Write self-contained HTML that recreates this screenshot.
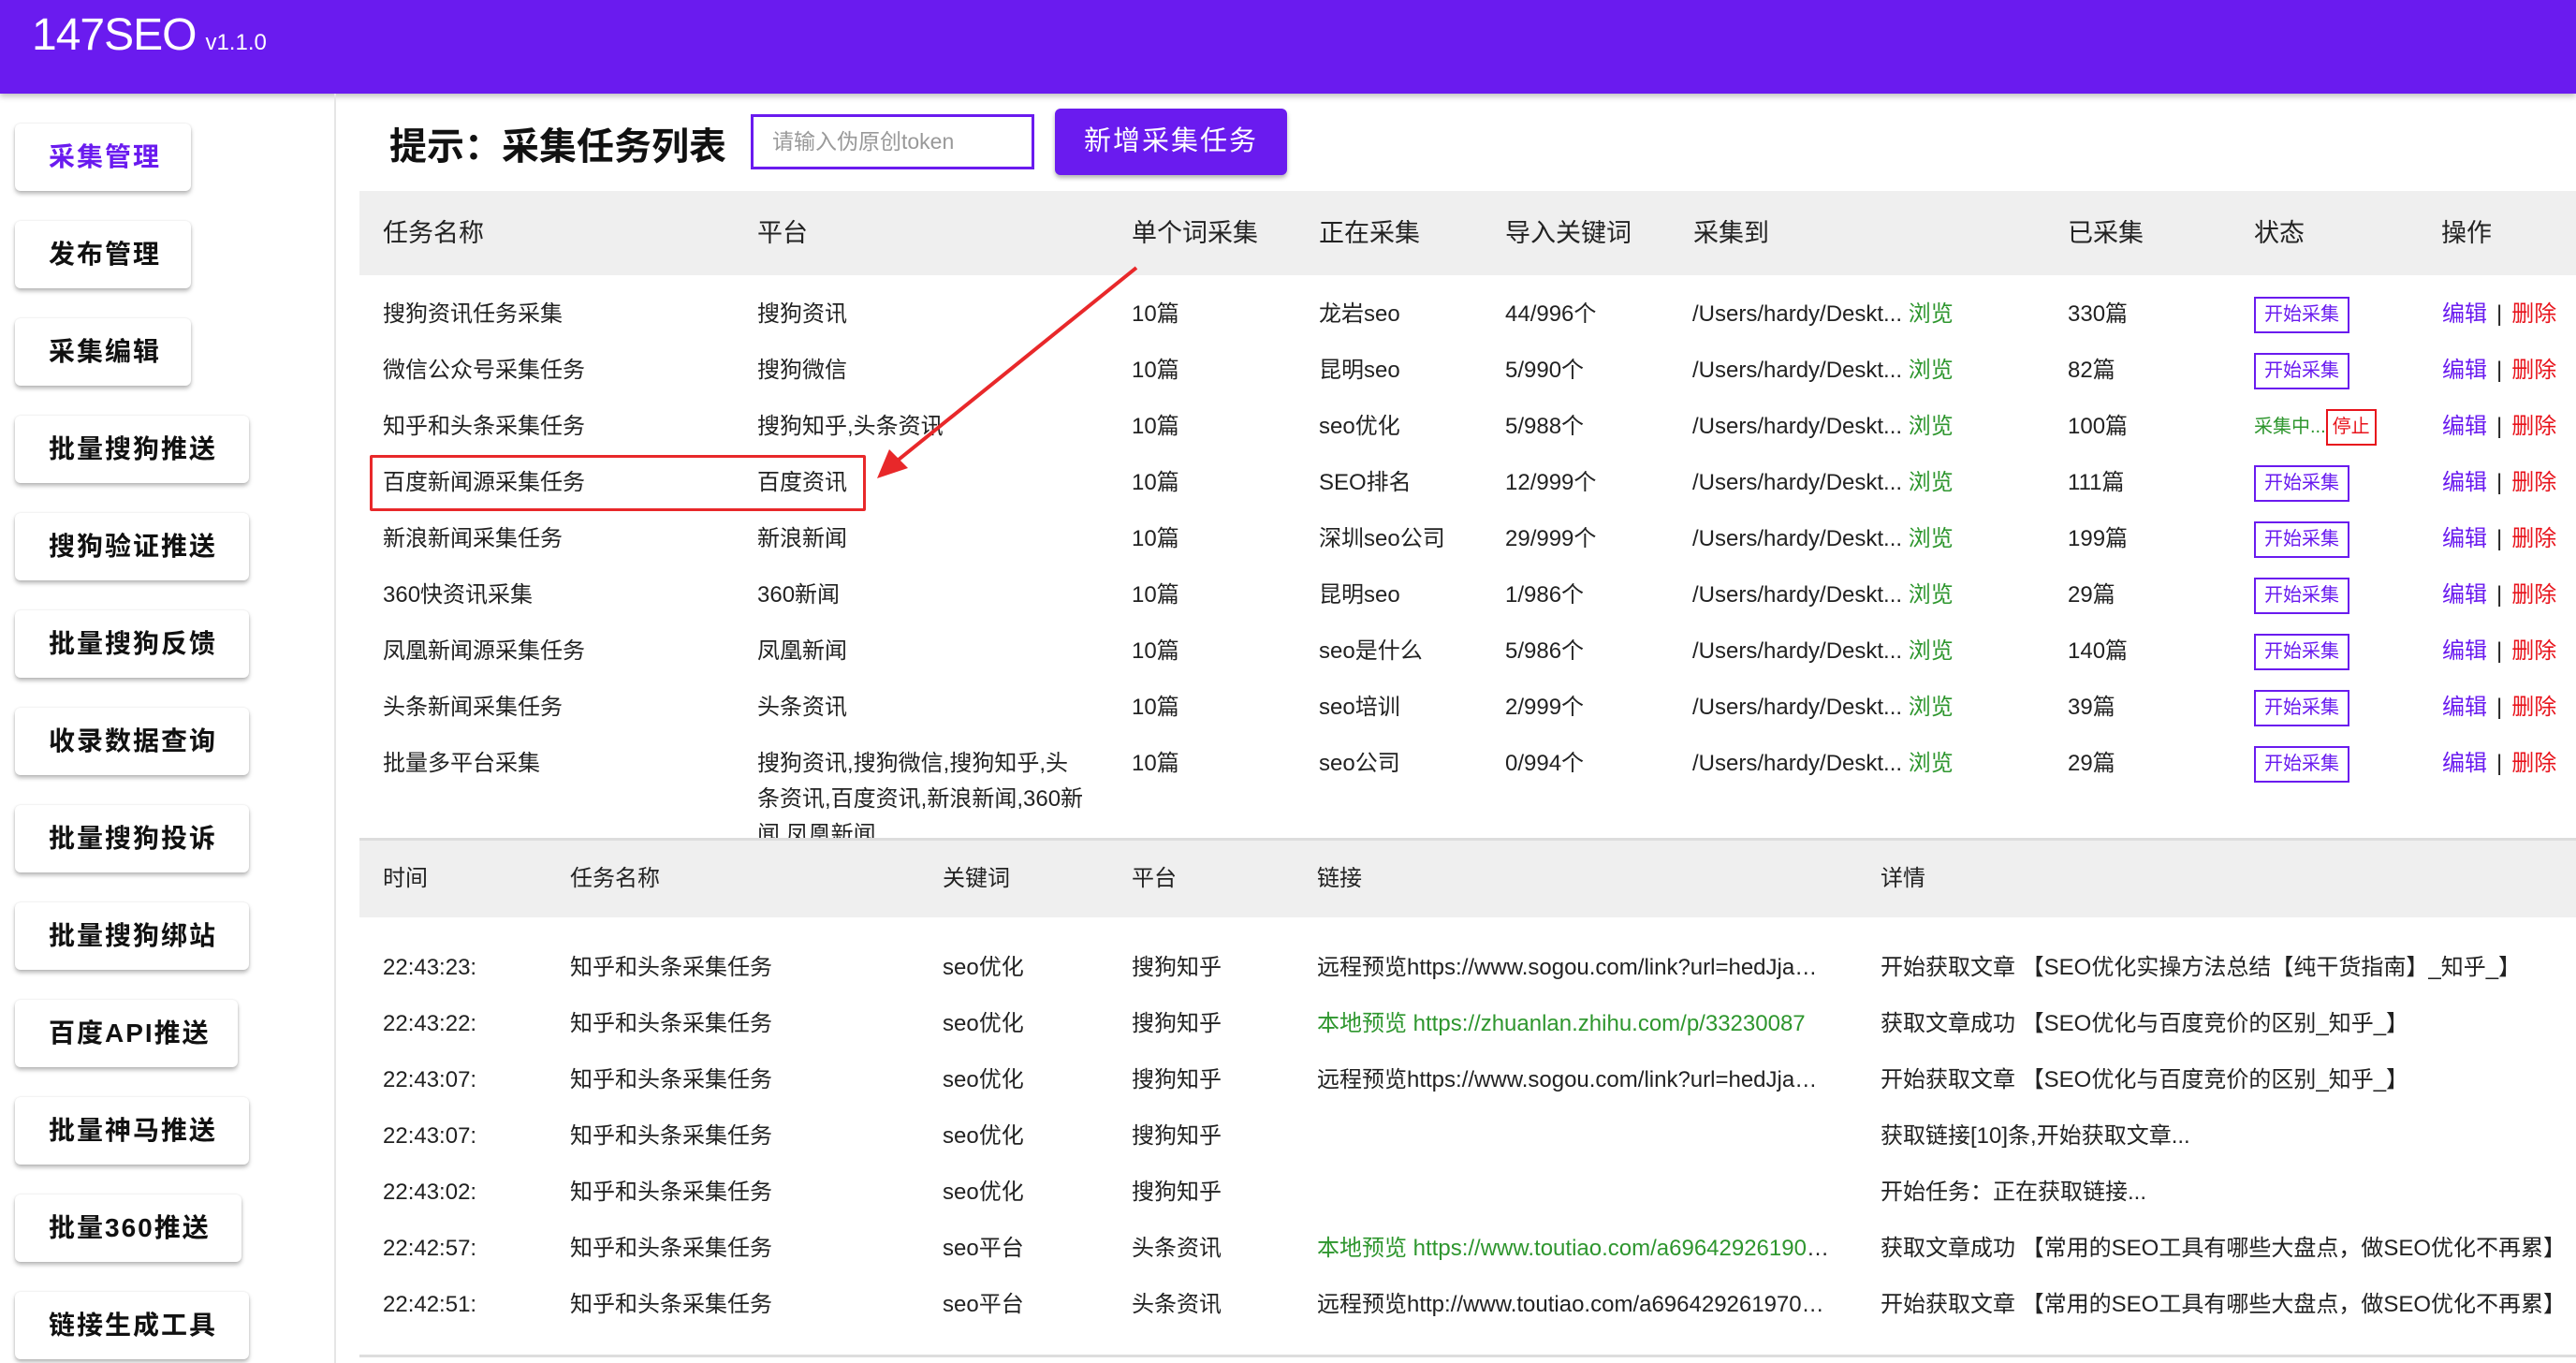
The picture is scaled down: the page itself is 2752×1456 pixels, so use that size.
<!DOCTYPE html>
<html><head><meta charset="utf-8"><style>
*{margin:0;padding:0;box-sizing:border-box}
body{width:2752px;height:1456px;overflow:hidden;background:#fff;font-family:"Liberation Sans","Noto Sans CJK SC",sans-serif;color:#222;position:relative}
.hdr{position:absolute;left:0;top:0;width:2752px;height:100px;background:#6a1bef;box-shadow:0 3px 6px rgba(0,0,0,.25)}
.logo{position:absolute;left:34px;top:10px;color:#fff;font-size:48px;letter-spacing:-1px}
.logo small{font-size:24px;margin-left:10px;letter-spacing:0}
.side{position:absolute;left:0;top:100px;width:359px;height:1356px;border-right:2px solid #e6e6e6}
.btn{position:absolute;left:16px;height:72px;width:188px;background:#fff;border-radius:6px;box-shadow:0 3px 5px rgba(0,0,0,.28),0 0 2px rgba(0,0,0,.1);font-size:28px;font-weight:bold;line-height:72px;padding-left:36px;letter-spacing:2px;color:#111}
.w{width:250px}
.title{position:absolute;left:416px;top:124px;font-size:40px;font-weight:bold;color:#111}
.inp{position:absolute;left:802px;top:122px;width:303px;height:59px;border:3px solid #6a1bef;font-size:23px;color:#999;line-height:53px;padding-left:20px}
.add{position:absolute;left:1127px;top:116px;width:248px;height:71px;background:#6a1bef;border-radius:6px;color:#fff;font-size:29px;line-height:71px;text-align:center;letter-spacing:2px;box-shadow:0 3px 5px rgba(0,0,0,.3)}
.th{position:absolute;left:384px;top:204px;width:2368px;height:90px;background:#efefef}
.c{position:absolute;white-space:nowrap}
.hd{font-size:27px;line-height:90px;top:0}
.r{font-size:24px;line-height:60px}
.g{color:#2e962e}.p{color:#6a1bef}.red{color:#e8141c}
.sb{display:inline-block;border:2px solid #6a1bef;color:#6a1bef;font-size:20px;line-height:35px;height:39px;padding:0 9px}
.lh{position:absolute;left:384px;top:895px;width:2368px;height:85px;background:#efefef;border-top:3px solid #ddd}
.lhd{font-size:24px;line-height:82px;top:0}
.clip{position:absolute;left:0;top:294px;width:2752px;height:601px;overflow:hidden}
.ell{overflow:hidden;text-overflow:ellipsis}
</style></head><body>
<div class="hdr"><div class="logo">147SEO<small>v1.1.0</small></div></div>
<div class="side">
<div class="btn p" style="top:32px;color:#6a1bef">采集管理</div>
<div class="btn" style="top:136px">发布管理</div>
<div class="btn" style="top:240px">采集编辑</div>
<div class="btn w" style="top:344px">批量搜狗推送</div>
<div class="btn w" style="top:448px">搜狗验证推送</div>
<div class="btn w" style="top:552px">批量搜狗反馈</div>
<div class="btn w" style="top:656px">收录数据查询</div>
<div class="btn w" style="top:760px">批量搜狗投诉</div>
<div class="btn w" style="top:864px">批量搜狗绑站</div>
<div class="btn" style="top:968px;width:238px">百度API推送</div>
<div class="btn w" style="top:1072px">批量神马推送</div>
<div class="btn" style="top:1176px;width:242px">批量360推送</div>
<div class="btn w" style="top:1280px">链接生成工具</div>
</div>
<div class="title">提示：采集任务列表</div>
<div class="inp">请输入伪原创token</div>
<div class="add">新增采集任务</div>
<div class="th">
<div class="c hd" style="left:25px">任务名称</div>
<div class="c hd" style="left:425px">平台</div>
<div class="c hd" style="left:825px">单个词采集</div>
<div class="c hd" style="left:1025px">正在采集</div>
<div class="c hd" style="left:1224px">导入关键词</div>
<div class="c hd" style="left:1425px">采集到</div>
<div class="c hd" style="left:1825px">已采集</div>
<div class="c hd" style="left:2024px">状态</div>
<div class="c hd" style="left:2224px">操作</div>
</div>
<div class="clip" id="clip"></div>
<div class="lh">
<div class="c lhd" style="left:25px">时间</div>
<div class="c lhd" style="left:225px">任务名称</div>
<div class="c lhd" style="left:623px">关键词</div>
<div class="c lhd" style="left:825px">平台</div>
<div class="c lhd" style="left:1023px">链接</div>
<div class="c lhd" style="left:1625px">详情</div>
</div>
<div id="log"></div>
<div style="position:absolute;left:384px;top:1447px;width:2368px;height:3px;background:#ddd"></div>
<div style="position:absolute;left:395px;top:486px;width:530px;height:60px;border:3px solid #e8282a;border-radius:2px"></div>
<svg style="position:absolute;left:0;top:0" width="2752" height="1456"><line x1="1214" y1="286" x2="955" y2="495" stroke="#e8282a" stroke-width="4"/><polygon points="937,511 950,480 970,500" fill="#e8282a"/></svg>
<script>
var T=[["搜狗资讯任务采集","搜狗资讯","龙岩seo","44/996个","330篇",0],
["微信公众号采集任务","搜狗微信","昆明seo","5/990个","82篇",0],
["知乎和头条采集任务","搜狗知乎,头条资讯","seo优化","5/988个","100篇",1],
["百度新闻源采集任务","百度资讯","SEO排名","12/999个","111篇",0],
["新浪新闻采集任务","新浪新闻","深圳seo公司","29/999个","199篇",0],
["360快资讯采集","360新闻","昆明seo","1/986个","29篇",0],
["凤凰新闻源采集任务","凤凰新闻","seo是什么","5/986个","140篇",0],
["头条新闻采集任务","头条资讯","seo培训","2/999个","39篇",0],
["批量多平台采集","搜狗资讯,搜狗微信,搜狗知乎,头条资讯,百度资讯,新浪新闻,360新闻,凤凰新闻","seo公司","0/994个","29篇",0]];
var h="";
T.forEach(function(r,i){var t=12+60*i;
h+='<div class="c r" style="left:409px;top:'+t+'px">'+r[0]+'</div>';
h+='<div class="c r" style="left:809px;top:'+t+'px;white-space:normal;width:350px;line-height:'+(i==8?'38px;padding-top:11px':'60px')+'">'+r[1]+'</div>';
h+='<div class="c r" style="left:1209px;top:'+t+'px">10篇</div>';
h+='<div class="c r" style="left:1409px;top:'+t+'px">'+r[2]+'</div>';
h+='<div class="c r" style="left:1608px;top:'+t+'px">'+r[3]+'</div>';
h+='<div class="c r" style="left:1808px;top:'+t+'px">/Users/hardy/Deskt... <span class="g">浏览</span></div>';
h+='<div class="c r" style="left:2209px;top:'+t+'px">'+r[4]+'</div>';
h+=r[5]?'<div class="c r" style="left:2408px;top:'+t+'px;font-size:20px"><span class="g">采集中...</span><span class="sb" style="border-color:#e8141c;color:#e8141c;padding:0 5px;vertical-align:middle">停止</span></div>':'<div class="c r" style="left:2408px;top:'+t+'px"><span class="sb" style="vertical-align:middle">开始采集</span></div>';
h+='<div class="c r" style="left:2609px;top:'+t+'px"><span class="p">编辑</span><span style="margin:0 10px">|</span><span class="red">删除</span></div>';
});
document.getElementById('clip').innerHTML=h;
var L=[["22:43:23:","seo优化","搜狗知乎",'远程预览https://www.sogou.com/link?url=hedJjaC291NbWrwHYHKCyPQj_ei8OKC','开始获取文章 【SEO优化实操方法总结【纯干货指南】_知乎_】'],
["22:43:22:","seo优化","搜狗知乎",'<span class="g">本地预览 https://zhuanlan.zhihu.com/p/33230087</span>','获取文章成功 【SEO优化与百度竞价的区别_知乎_】'],
["22:43:07:","seo优化","搜狗知乎",'远程预览https://www.sogou.com/link?url=hedJjaC291NbWrwHYHKCyPQj_ei8OKC','开始获取文章 【SEO优化与百度竞价的区别_知乎_】'],
["22:43:07:","seo优化","搜狗知乎",'','获取链接[10]条,开始获取文章...'],
["22:43:02:","seo优化","搜狗知乎",'','开始任务：正在获取链接...'],
["22:42:57:","seo平台","头条资讯",'<span class="g">本地预览 https://www.toutiao.com/a6964292619000000000</span>','获取文章成功 【常用的SEO工具有哪些大盘点，做SEO优化不再累】'],
["22:42:51:","seo平台","头条资讯",'远程预览http://www.toutiao.com/a6964292619700000000','开始获取文章 【常用的SEO工具有哪些大盘点，做SEO优化不再累】']];
h="";
L.forEach(function(r,i){var t=1004+60*i;
h+='<div class="c r" style="left:409px;top:'+t+'px">'+r[0]+'</div>';
h+='<div class="c r" style="left:609px;top:'+t+'px">知乎和头条采集任务</div>';
h+='<div class="c r" style="left:1007px;top:'+t+'px">'+r[1]+'</div>';
h+='<div class="c r" style="left:1209px;top:'+t+'px">'+r[2]+'</div>';
h+='<div class="c r ell" style="left:1407px;top:'+t+'px;width:550px">'+r[3]+'</div>';
h+='<div class="c r" style="left:2009px;top:'+t+'px">'+r[4]+'</div>';
});
document.getElementById('log').innerHTML=h;
</script>
</body></html>
